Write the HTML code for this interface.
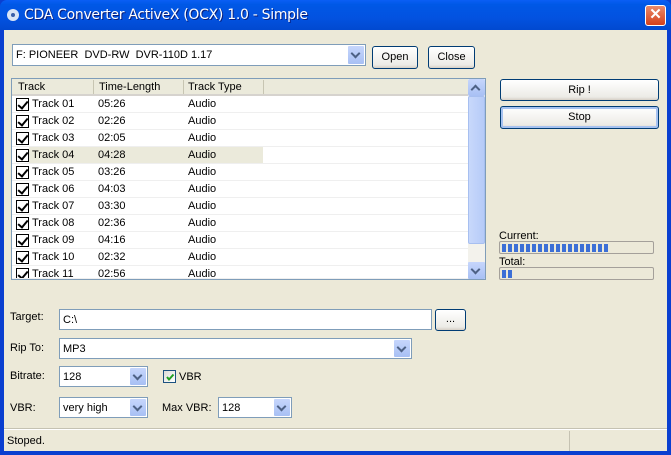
<!DOCTYPE html>
<html><head><meta charset="utf-8"><style>
*{box-sizing:border-box;margin:0;padding:0}
body{width:671px;height:455px;overflow:hidden;background:#0a3fd0;font-family:"Liberation Sans",sans-serif;font-size:11px;color:#000;position:relative}
.a{position:absolute}
#title{left:0;top:0;width:671px;height:30px;background:linear-gradient(#0a5ff5,#0058e6 15%,#0352e0 60%,#0149d0);border-radius:7px 7px 0 0}
#title span{position:absolute;left:24px;top:7px;color:#fff;font-size:14px;font-family:"DejaVu Sans",sans-serif;text-shadow:1px 1px #0a1e7a;letter-spacing:-0.3px}
#xbtn{left:645px;top:5px;width:21px;height:21px;background:linear-gradient(#e88a6a,#d6401c);border:1px solid #fff;border-radius:3px;color:#fff;font-weight:bold;font-size:15px;text-align:center;line-height:18px}
#body{left:4px;top:30px;width:663px;height:421px;background:#ece9d8}
.box{background:#fff;border:1px solid #7f9db9}
.dd{position:absolute;right:1px;top:1px;bottom:1px;width:16px;background:linear-gradient(#c6d6fc,#a8c0f4);border-radius:1px}
.dd:after,.up:after{content:"";position:absolute;left:4px;top:4px;width:5px;height:5px;border-right:2px solid #4d6185;border-bottom:2px solid #4d6185;transform:rotate(45deg)}
.up:after{top:7px;transform:rotate(-135deg)}
.btn{background:linear-gradient(#fff,#ecebe6 85%,#d6d0c5);border:1px solid #003c74;border-radius:3px;text-align:center}
.t{position:absolute;white-space:nowrap}
.row{position:absolute;left:12px;width:456px;height:17px;border-bottom:1px solid #efefef}
.cb{position:absolute;left:4px;top:2px;width:13px;height:13px;border:1px solid #000;background:#fff}
.cb:after{content:"";position:absolute;left:3px;top:0px;width:4px;height:8px;border-right:2px solid #000;border-bottom:2px solid #000;transform:rotate(40deg)}
.prog{border:1px solid #a4a09a;background:#ece9d8;height:13px;width:155px;border-radius:2px}
</style></head><body>
<div class="a" id="title"><svg class="a" style="left:6px;top:8px" width="14" height="14"><circle cx="7" cy="7" r="6" fill="#d9e4f5"/><circle cx="7" cy="7" r="2" fill="#3a5fa8"/></svg><span>CDA Converter ActiveX (OCX) 1.0 - Simple</span></div>
<div class="a" id="xbtn">✕</div>
<div class="a" id="body"></div>

<div class="a box" style="left:12px;top:44px;width:354px;height:22px"><span class="t" style="left:3px;top:4px">F: PIONEER&nbsp; DVD-RW&nbsp; DVR-110D 1.17</span><div class="dd"></div></div>
<div class="a btn" style="left:372px;top:46px;width:46px;height:23px;line-height:21px">Open</div>
<div class="a btn" style="left:428px;top:46px;width:47px;height:23px;line-height:21px">Close</div>

<div class="a box" style="left:11px;top:78px;width:475px;height:202px;overflow:hidden">
 <div class="a" style="left:0;top:0;width:456px;height:17px;background:#ebeadb;border-bottom:2px solid #d6d3ce"></div>
 <div class="t" style="left:6px;top:2px">Track</div>
 <div class="a" style="left:81px;top:1px;width:1px;height:14px;background:#c7c5b2"></div>
 <div class="t" style="left:87px;top:2px">Time-Length</div>
 <div class="a" style="left:171px;top:1px;width:1px;height:14px;background:#c7c5b2"></div>
 <div class="t" style="left:176px;top:2px">Track Type</div>
 <div class="a" style="left:251px;top:1px;width:1px;height:14px;background:#c7c5b2"></div>
 <div class="a" style="left:456px;top:0;width:17px;height:200px;background:#f3f2ec">
  <div class="a up" style="left:0;top:0;width:17px;height:17px;background:linear-gradient(#c6d6fc,#a8c0f4);border-radius:2px"></div>
  <div class="a" style="left:0;top:17px;width:17px;height:148px;background:linear-gradient(90deg,#c8d8fb,#b6cbf8);border:1px solid #a7bff0;border-radius:2px"></div>
  <div class="a dd" style="left:0;top:183px;width:17px;height:17px;right:auto;bottom:auto"></div>
 </div>
</div>
<div id="rows"></div>
<script>
var d=[["01","05:26"],["02","02:26"],["03","02:05"],["04","04:28"],["05","03:26"],["06","04:03"],["07","03:30"],["08","02:36"],["09","04:16"],["10","02:32"],["11","02:56"]];
var h="";d.forEach(function(r,i){var y=96+i*17;h+='<div class="row" style="top:'+y+'px;'+(i==10?'height:'+(279-y)+'px;overflow:hidden;':'')+'">'+(i==3?'<div class="a" style="left:17px;top:0;width:234px;height:16px;background:#ebeadb"></div>':'')+'<div class="cb"></div><span class="t" style="left:20px;top:2px">Track '+r[0]+'</span><span class="t" style="left:86px;top:2px">'+r[1]+'</span><span class="t" style="left:176px;top:2px">Audio</span></div>';});
document.getElementById("rows").innerHTML=h;
</script>

<div class="a btn" style="left:500px;top:79px;width:159px;height:22px;line-height:20px">Rip !</div>
<div class="a btn" style="left:500px;top:106px;width:159px;height:23px;line-height:21px;box-shadow:inset 0 0 0 2px #a6c2f0">Stop</div>

<span class="t" style="left:499px;top:230px">Current:</span>
<div class="a prog" style="left:499px;top:241px"><div class="a" style="left:2px;top:2px;width:106px;height:8px;background:repeating-linear-gradient(90deg,#3c6fd6 0 4px,transparent 4px 6px)"></div></div>
<span class="t" style="left:499px;top:256px">Total:</span>
<div class="a prog" style="left:499px;top:267px"><div class="a" style="left:2px;top:2px;width:10px;height:8px;background:repeating-linear-gradient(90deg,#3c6fd6 0 4px,transparent 4px 6px)"></div></div>

<span class="t" style="left:10px;top:311px">Target:</span>
<div class="a box" style="left:59px;top:309px;width:373px;height:21px"><span class="t" style="left:3px;top:4px">C:\</span></div>
<div class="a btn" style="left:435px;top:309px;width:31px;height:22px;line-height:18px">...</div>

<span class="t" style="left:10px;top:342px">Rip To:</span>
<div class="a box" style="left:59px;top:338px;width:353px;height:21px"><span class="t" style="left:3px;top:4px">MP3</span><div class="dd"></div></div>

<span class="t" style="left:10px;top:370px">Bitrate:</span>
<div class="a box" style="left:59px;top:366px;width:89px;height:21px"><span class="t" style="left:3px;top:4px">128</span><div class="dd"></div></div>
<div class="a" style="left:163px;top:370px;width:13px;height:13px;border:1px solid #1c5180;background:linear-gradient(135deg,#dcdcd7,#fff)"><svg class="a" style="left:1px;top:1px" width="10" height="10"><path d="M2 5 L4 7.5 L8.5 2.5" stroke="#21a121" stroke-width="2" fill="none"/></svg></div>
<span class="t" style="left:179px;top:371px">VBR</span>

<span class="t" style="left:10px;top:402px">VBR:</span>
<div class="a box" style="left:59px;top:397px;width:89px;height:21px"><span class="t" style="left:3px;top:4px">very high</span><div class="dd"></div></div>
<span class="t" style="left:162px;top:402px">Max VBR:</span>
<div class="a box" style="left:218px;top:397px;width:74px;height:21px"><span class="t" style="left:3px;top:4px">128</span><div class="dd"></div></div>

<div class="a" style="left:4px;top:428px;width:663px;height:1px;background:#c5c2b2"></div>
<div class="a" style="left:4px;top:429px;width:663px;height:1px;background:#fff"></div>
<div class="a" style="left:569px;top:431px;width:1px;height:20px;background:#c5c2b2"></div>
<span class="t" style="left:7px;top:435px">Stoped.</span>
</body></html>
